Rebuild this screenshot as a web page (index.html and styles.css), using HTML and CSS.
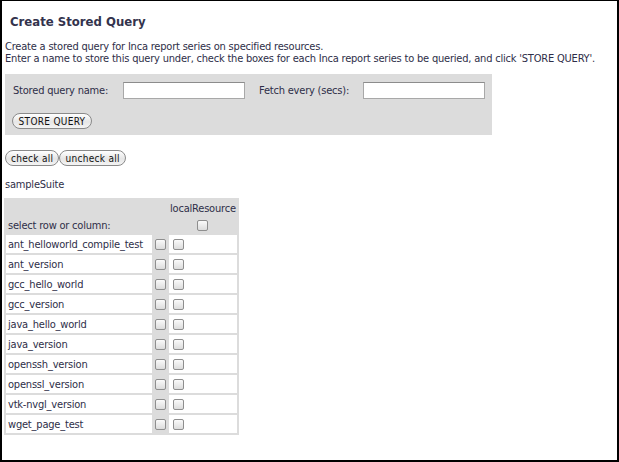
FILE: index.html
```html
<!DOCTYPE html>
<html>
<head>
<meta charset="utf-8">
<link rel="stylesheet" href="styles.css">
</head>
<body>
<div class="frame">
  <h2 class="title">Create Stored Query</h2>
  <p class="intro">Create a stored query for Inca report series on specified resources.<br>Enter a name to store this query under, check the boxes for each Inca report series to be queried, and click 'STORE QUERY'.</p>
  <div class="formbox">
    <div class="fields">
      <label class="lbl lbl-name">Stored query name:</label>
      <input class="txt" type="text">
      <label class="lbl lbl-fetch">Fetch every (secs):</label>
      <input class="txt" type="text">
    </div>
    <button class="pill store">STORE QUERY</button>
  </div>
  <div class="checkbtns">
    <button class="pill">check all</button><button class="pill">uncheck all</button>
  </div>
  <div class="suite">sampleSuite</div>
  <table class="grid">
    <tr class="hdr"><td></td><td></td><td class="res">localResource</td></tr>
    <tr class="sel"><td class="sellbl">select row or column:</td><td></td><td class="c"><input type="checkbox" class="cb"></td></tr>
    <tr><td class="name">ant_helloworld_compile_test</td><td class="c"><input type="checkbox" class="cb"></td><td class="w"><input type="checkbox" class="cb"></td></tr>
    <tr><td class="name">ant_version</td><td class="c"><input type="checkbox" class="cb"></td><td class="w"><input type="checkbox" class="cb"></td></tr>
    <tr><td class="name">gcc_hello_world</td><td class="c"><input type="checkbox" class="cb"></td><td class="w"><input type="checkbox" class="cb"></td></tr>
    <tr><td class="name">gcc_version</td><td class="c"><input type="checkbox" class="cb"></td><td class="w"><input type="checkbox" class="cb"></td></tr>
    <tr><td class="name">java_hello_world</td><td class="c"><input type="checkbox" class="cb"></td><td class="w"><input type="checkbox" class="cb"></td></tr>
    <tr><td class="name">java_version</td><td class="c"><input type="checkbox" class="cb"></td><td class="w"><input type="checkbox" class="cb"></td></tr>
    <tr><td class="name">openssh_version</td><td class="c"><input type="checkbox" class="cb"></td><td class="w"><input type="checkbox" class="cb"></td></tr>
    <tr><td class="name">openssl_version</td><td class="c"><input type="checkbox" class="cb"></td><td class="w"><input type="checkbox" class="cb"></td></tr>
    <tr><td class="name">vtk-nvgl_version</td><td class="c"><input type="checkbox" class="cb"></td><td class="w"><input type="checkbox" class="cb"></td></tr>
    <tr><td class="name">wget_page_test</td><td class="c"><input type="checkbox" class="cb"></td><td class="w"><input type="checkbox" class="cb"></td></tr>
  </table>
</div>
</body>
</html>
```
FILE: styles.css
```css
html, body {
  margin: 0;
  padding: 0;
  background: #fff;
}
.frame {
  box-sizing: border-box;
  width: 619px;
  height: 462px;
  border-top: 1px solid #000;
  border-left: 2px solid #000;
  border-right: 2px solid #000;
  border-bottom: 2px solid #000;
  padding: 0 3px;
  font-family: "DejaVu Sans Condensed", "DejaVu Sans", sans-serif;
  font-size: 11px;
  letter-spacing: -0.2px;
  color: #2e2e48;
}
.title {
  margin: 13px 0 0 5px;
  font-size: 13px;
  font-weight: bold;
  line-height: 16px;
  letter-spacing: 0;
  color: #33334d;
}
.intro {
  margin: 11px 0 0 0;
  line-height: 12px;
  white-space: nowrap;
}
.formbox {
  margin-top: 9px;
  width: 487px;
  height: 61px;
  box-sizing: border-box;
  background: #dcdcdc;
  padding: 8px 0 0 7px;
}
.fields {
  display: flex;
  align-items: center;
  height: 16px;
}
.lbl {
  white-space: nowrap;
}
.lbl-name { width: 110px; margin-left: 1px; }
.lbl-fetch { margin-left: 14px; width: 104px; }
.txt {
  box-sizing: border-box;
  width: 122px;
  height: 17px;
  margin: 0;
  padding: 0;
  border: 1px solid #a8a8a8;
  border-top-color: #8c8c8c;
  background: #fff;
}
.pill {
  font-family: "DejaVu Sans Condensed", "DejaVu Sans", sans-serif;
  font-size: 10px;
  letter-spacing: 0.3px;
  color: #111;
  height: 16px;
  line-height: 13px;
  padding: 0 7px;
  margin: 0;
  border: 1px solid #8a8a8a;
  border-radius: 8px;
  background: linear-gradient(#ffffff, #e6e6e6 55%, #f4f4f4);
}
.store {
  margin-top: 15px;
  width: 80px;
  padding: 0 4px;
}
.checkbtns {
  margin-top: 15px;
  display: flex;
  gap: 0;
}
.checkbtns .pill { padding: 0 5px; }
.suite {
  margin-top: 12px;
  line-height: 14px;
}
.grid {
  margin-top: 6px;
  margin-left: -1px;
  border-collapse: separate;
  border-spacing: 2px;
  background: #dcdcdc;
}
.grid td {
  padding: 0 2px;
  height: 18px;
  white-space: nowrap;
}
.grid .hdr td { height: 14px; padding-top: 1px; }
.grid .sel td { height: 16px; }
.grid .res { text-align: center; padding: 0 1px; }
.grid .name { background: #fff; width: 142px; }
.grid .c { text-align: center; padding: 0 1px; }
.grid .w { background: #fff; padding: 0 0 0 4px; }
.cb {
  appearance: none;
  -webkit-appearance: none;
  box-sizing: border-box;
  width: 11px;
  height: 11px;
  margin: 0;
  vertical-align: middle;
  border: 1px solid #8e8e8e;
  border-radius: 2px;
  background: linear-gradient(#fafafa, #dcdcdc);
}
```
